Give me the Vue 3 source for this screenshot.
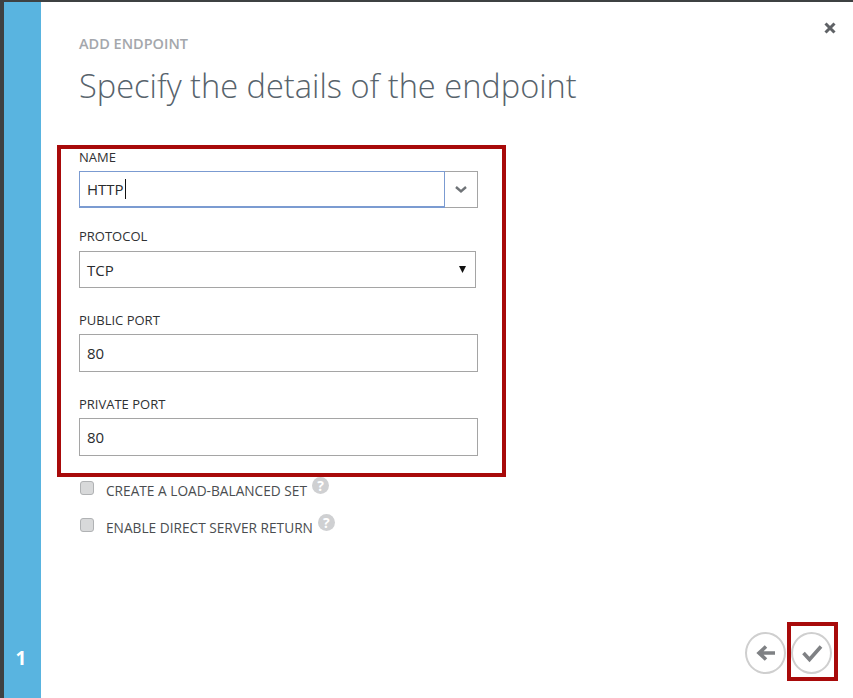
<template>
  <div class="dialog">
    <aside class="rail">
      <span class="step">1</span>
    </aside>
    <main class="content">
      <button class="close" aria-label="Close">
        <svg width="12" height="12" viewBox="0 0 12 12">
          <path d="M1.5 1.5 L10.5 10.5 M10.5 1.5 L1.5 10.5" stroke="#5f6266" stroke-width="3" fill="none" />
        </svg>
      </button>

      <div class="eyebrow">ADD ENDPOINT</div>
      <h1 class="title">Specify the details of the endpoint</h1>

      <form class="form">
        <div class="highlight form-highlight"></div>

        <div class="field field-name">
          <label>NAME</label>
          <div class="combo">
            <div class="input focused">HTTP<span class="caret"></span></div>
            <div class="combo-btn">
              <svg width="14" height="9" viewBox="0 0 14 9">
                <path d="M2 2 L7 6.5 L12 2" stroke="#6f7377" stroke-width="2.4" fill="none" />
              </svg>
            </div>
          </div>
        </div>

        <div class="field field-protocol">
          <label>PROTOCOL</label>
          <div class="input select">
            TCP
            <svg width="7" height="7" viewBox="0 0 7 7"><path d="M0 0 H7 L3.5 7 Z" fill="#111" /></svg>
          </div>
        </div>

        <div v-for="port in ports" :key="port" class="field field-port">
          <label>{{ port }}</label>
          <div class="input">80</div>
        </div>

        <div class="checks">
          <div v-for="c in checks" :key="c" class="check">
            <span class="box"></span>
            <span class="check-label">{{ c }}</span>
            <span class="help">?</span>
          </div>
        </div>
      </form>

      <footer class="nav">
        <button class="round" aria-label="Back">
          <svg width="22" height="20" viewBox="0 0 22 20">
            <path d="M20 10 H5 M11 3.5 L4 10 L11 16.5" stroke="#7f8184" stroke-width="3.6" fill="none" />
          </svg>
        </button>
        <button class="round confirm" aria-label="Confirm">
          <svg width="22" height="20" viewBox="0 0 22 20">
            <path d="M2.5 10 L8.5 16.5 L20 3.5" stroke="#7f8184" stroke-width="3.6" fill="none" />
          </svg>
          <span class="highlight confirm-highlight"></span>
        </button>
      </footer>
    </main>
  </div>
</template>

<script setup>
const ports = ['PUBLIC PORT', 'PRIVATE PORT']
const checks = ['CREATE A LOAD-BALANCED SET', 'ENABLE DIRECT SERVER RETURN']
</script>

<style>
html, body { margin: 0; background: #fff; }
</style>

<style scoped>
.dialog {
  display: flex;
  width: 853px;
  height: 698px;
  box-sizing: border-box;
  border-top: 2px solid #3e4142;
  overflow: hidden;
  background: #fff;
  font-family: "Open Sans", "Liberation Sans", sans-serif;
}

.rail {
  box-sizing: border-box;
  width: 41px;
  flex-shrink: 0;
  border-left: 4px solid #3e4142;
  background: #59b4e0;
  display: flex;
  align-items: flex-end;
  justify-content: center;
  padding: 0 3px 30px 0;
}
.step {
  color: #fff;
  font-size: 19px;
  font-weight: 700;
  line-height: 20px;
}

.content {
  position: relative;
  flex: 1;
  padding: 33px 0 0 38px;
}

.close {
  position: absolute;
  top: 20px;
  right: 17px;
  width: 12px;
  height: 12px;
  padding: 0;
  border: 0;
  background: none;
  display: flex;
}

.eyebrow {
  font-size: 14.5px;
  font-weight: 600;
  line-height: 18px;
  color: #a4a7ac;
}

.title {
  margin: 11px 0 0;
  font-size: 32.6px;
  font-weight: 300;
  line-height: 44px;
  color: #57636c;
}

.form {
  position: relative;
  margin-top: 38px;
  width: 399px;
}

.highlight {
  position: absolute;
  box-sizing: border-box;
  border: 4px solid #a80a0a;
  pointer-events: none;
}
.form-highlight {
  top: -1px;
  left: -22px;
  width: 449px;
  height: 332px;
}

.field label {
  display: block;
  font-size: 13px;
  font-weight: 400;
  line-height: 18px;
  color: #2f3133;
}
.field-name { padding-top: 2px; }
.field-name label { margin-bottom: 5px; }
.field-protocol { margin-top: 19px; }
.field-protocol label { margin-bottom: 6px; }
.field-port { margin-top: 23px; }
.field-port label { margin-bottom: 5px; }

.input {
  box-sizing: border-box;
  height: 38px;
  padding-left: 7px;
  border: 1px solid #a5a5a5;
  background: #fff;
  display: flex;
  align-items: center;
  font-size: 15px;
  color: #2a2c2e;
}

.combo { display: flex; height: 37px; }
.combo .input { height: 37px; flex: 1; }
.focused { border: 1px solid #7b9bd1; border-bottom-width: 2px; }
.caret {
  display: inline-block;
  width: 1px;
  height: 20px;
  margin-left: 1px;
  background: #111;
}
.combo-btn {
  box-sizing: border-box;
  width: 33px;
  border: 1px solid #a5a5a5;
  border-left: 0;
  display: flex;
  align-items: center;
  justify-content: center;
}

.select {
  width: 397px;
  height: 37px;
  justify-content: space-between;
  padding-right: 9px;
}

.checks { margin-top: 23px; }
.check {
  display: flex;
  align-items: flex-start;
  height: 37px;
  color: #4a4d50;
  font-size: 13.7px;
  line-height: 20px;
}
.box {
  box-sizing: border-box;
  width: 14px;
  height: 14px;
  margin: 2px 12px 0 1px;
  border: 1px solid #b0b2b4;
  border-radius: 3px;
  background: #d8d9da;
}
.check-label { padding-top: 2px; }
.help {
  width: 17px;
  height: 17px;
  margin: -2px 0 0 5px;
  border-radius: 50%;
  background: #cfd0d2;
  color: #fff;
  font-size: 14px;
  font-weight: 700;
  line-height: 17px;
  text-align: center;
}

.nav {
  position: absolute;
  right: 21px;
  bottom: 24px;
  display: flex;
  gap: 5px;
}
.round {
  position: relative;
  box-sizing: border-box;
  width: 41px;
  height: 42px;
  padding: 0;
  border: 2px solid #cfcfcf;
  border-radius: 50%;
  background: #fff;
  display: flex;
  align-items: center;
  justify-content: center;
}
.confirm-highlight {
  top: -12px;
  left: -6px;
  width: 51px;
  height: 59px;
}
</style>
